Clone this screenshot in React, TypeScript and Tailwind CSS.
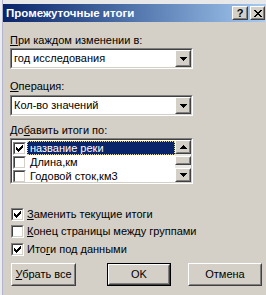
import React from "react";

function Raised({ className = "", children }: { className?: string; children?: React.ReactNode }) {
  return (
    <div className={"border border-t-white border-l-white border-b-[#404040] border-r-[#404040] bg-[#d4d0c8] " + className}>
      <div className="w-full h-full border border-t-[#d4d0c8] border-l-[#d4d0c8] border-b-[#808080] border-r-[#808080] flex items-center justify-center">
        {children}
      </div>
    </div>
  );
}

function Sunken({ className = "", children }: { className?: string; children?: React.ReactNode }) {
  return (
    <div className={"border border-t-[#808080] border-l-[#808080] border-b-white border-r-white " + className}>
      <div className="w-full h-full border border-t-[#404040] border-l-[#404040] border-b-[#d4d0c8] border-r-[#d4d0c8] bg-white flex overflow-hidden">
        {children}
      </div>
    </div>
  );
}

function Check() {
  return (
    <svg width="7" height="7" viewBox="0 0 7 7" shapeRendering="crispEdges" className="block">
      <path
        d="M6 0h1v1h-1z M5 1h2v1h-2z M0 2h1v1h-1z M4 2h3v1h-3z M0 3h2v1h-2z M3 3h3v1h-3z M0 4h5v1h-5z M1 5h3v1h-3z M2 6h1v1h-1z"
        fill="#000"
      />
    </svg>
  );
}

function CheckBox({ checked }: { checked?: boolean }) {
  return (
    <div className="w-[13px] h-[13px] shrink-0 border border-t-[#808080] border-l-[#808080] border-b-white border-r-white">
      <div className="w-full h-full border border-t-[#404040] border-l-[#404040] border-b-[#d4d0c8] border-r-[#d4d0c8] bg-white flex items-start justify-start pl-[1px] pt-[1px]">
        {checked ? <Check /> : null}
      </div>
    </div>
  );
}

function ArrowDown() {
  return (
    <svg width="7" height="4" viewBox="0 0 7 4" shapeRendering="crispEdges" className="block">
      <path d="M0 0h7v1h-7z M1 1h5v1h-5z M2 2h3v1h-3z M3 3h1v1h-1z" fill="#000" />
    </svg>
  );
}

function ArrowUp() {
  return (
    <svg width="7" height="4" viewBox="0 0 7 4" shapeRendering="crispEdges" className="block">
      <path d="M3 0h1v1h-1z M2 1h3v1h-3z M1 2h5v1h-5z M0 3h7v1h-7z" fill="#000" />
    </svg>
  );
}

function CloseGlyph() {
  return (
    <svg width="8" height="7" viewBox="0 0 8 7" shapeRendering="crispEdges" className="block">
      <path
        d="M0 0h2v1h-2z M6 0h2v1h-2z M1 1h2v1h-2z M5 1h2v1h-2z M2 2h4v1h-4z M3 3h2v1h-2z M2 4h4v1h-4z M1 5h2v1h-2z M5 5h2v1h-2z M0 6h2v1h-2z M6 6h2v1h-2z"
        fill="#000"
      />
    </svg>
  );
}

function Combo({ text }: { text: string }) {
  return (
    <Sunken className="w-[183px] h-[21px]">
      <div className="flex-1 pl-[2px] leading-[17px] whitespace-nowrap">{text}</div>
      <Raised className="w-[16px] h-full">
        <ArrowDown />
      </Raised>
    </Sunken>
  );
}

function Label({ children, className = "" }: { children: React.ReactNode; className?: string }) {
  return <div className={"h-[13px] leading-[13px] whitespace-nowrap " + className}>{children}</div>;
}

function U({ children }: { children: React.ReactNode }) {
  return <span className="underline underline-offset-[1px]">{children}</span>;
}

export default function App() {
  return (
    <div className="w-[266px] h-[295px] bg-[#d4d0c8] flex overflow-hidden font-['Liberation_Sans',Arial,sans-serif] text-[11px] text-black">
      <div className="w-[2px] h-full bg-[#ececf0] shrink-0" />
      <div className="w-[1px] h-full bg-[#b2b6cc] shrink-0" />
      <div className="flex-1 flex flex-col">
        <div className="h-[4px] bg-[#e8e8e8] shrink-0" />
        <div className="h-[18px] mr-[1px] flex items-center bg-gradient-to-r from-[#0a246a] to-[#a6caf0] shrink-0">
          <div className="flex-1 pl-[3px] pt-[1px] text-white font-bold text-[11.5px] leading-[13px] whitespace-nowrap">
            Промежуточные итоги
          </div>
          <Raised className="w-[16px] h-[14px] mr-[2px]">
            <span className="font-bold text-[11px] leading-[10px]">?</span>
          </Raised>
          <Raised className="w-[15px] h-[14px]">
            <CloseGlyph />
          </Raised>
        </div>

        <div className="flex flex-col pl-[7px]">
          <Label className="mt-[12px]">
            <U>П</U>ри каждом изменении в:
          </Label>
          <div className="mt-[1px]">
            <Combo text="год исследования" />
          </div>

          <Label className="mt-[11px]">
            <U>О</U>перация:
          </Label>
          <div className="mt-[2px]">
            <Combo text="Кол-во значений" />
          </div>

          <Label className="mt-[8px]">
            До<U>б</U>авить итоги по:
          </Label>
          <div className="mt-[1px]">
            <Sunken className="w-[183px] h-[46px]">
              <div className="flex-1 flex flex-col pt-[1px] overflow-hidden">
                <div className="h-[14px] flex items-center shrink-0">
                  <div className="ml-[1px]">
                    <CheckBox checked />
                  </div>
                  <div className="ml-[1px] flex-1 h-full bg-[#0a246a] text-white pl-[2px] leading-[12px] border border-dotted border-[#e8dc8c] whitespace-nowrap">
                    название реки
                  </div>
                </div>
                <div className="h-[14px] flex items-center shrink-0">
                  <div className="ml-[1px]">
                    <CheckBox />
                  </div>
                  <div className="ml-[1px] flex-1 pl-[3px] leading-[14px] whitespace-nowrap">Длина,км</div>
                </div>
                <div className="h-[14px] flex items-center shrink-0">
                  <div className="ml-[1px]">
                    <CheckBox />
                  </div>
                  <div className="ml-[1px] flex-1 pl-[3px] leading-[14px] whitespace-nowrap">Годовой сток,км3</div>
                </div>
              </div>
              <div className="w-[16px] h-full flex flex-col bg-[#ebe9e5]">
                <Raised className="w-[16px] h-[14px] shrink-0">
                  <ArrowUp />
                </Raised>
                <div className="flex-1 pt-[2px]">
                  <Raised className="w-[16px] h-[9px]" />
                </div>
                <Raised className="w-[16px] h-[14px] shrink-0">
                  <ArrowDown />
                </Raised>
              </div>
            </Sunken>
          </div>

          <div className="mt-[24px] ml-[1px] flex flex-col">
            <div className="h-[13px] flex items-center">
              <CheckBox checked />
              <span className="ml-[3px] leading-[13px] whitespace-nowrap">
                <U>З</U>аменить текущие итоги
              </span>
            </div>
            <div className="h-[13px] flex items-center mt-[4px]">
              <CheckBox />
              <span className="ml-[3px] leading-[13px] whitespace-nowrap">
                <U>К</U>онец страницы между группами
              </span>
            </div>
            <div className="h-[13px] flex items-center mt-[5px]">
              <CheckBox checked />
              <span className="ml-[3px] leading-[13px] whitespace-nowrap">
                Ито<U>г</U>и под данными
              </span>
            </div>
          </div>

          <div className="mt-[7px] ml-[1px] flex">
            <Raised className="w-[65px] h-[23px]">
              <span className="leading-[13px] whitespace-nowrap">
                <U>У</U>брать все
              </span>
            </Raised>
            <div className="ml-[31px] w-[64px] h-[23px] border border-black">
              <Raised className="w-full h-full">
                <span className="leading-[13px]">OK</span>
              </Raised>
            </div>
            <Raised className="ml-[17px] w-[74px] h-[23px]">
              <span className="leading-[13px]">Отмена</span>
            </Raised>
          </div>
        </div>
      </div>
    </div>
  );
}
